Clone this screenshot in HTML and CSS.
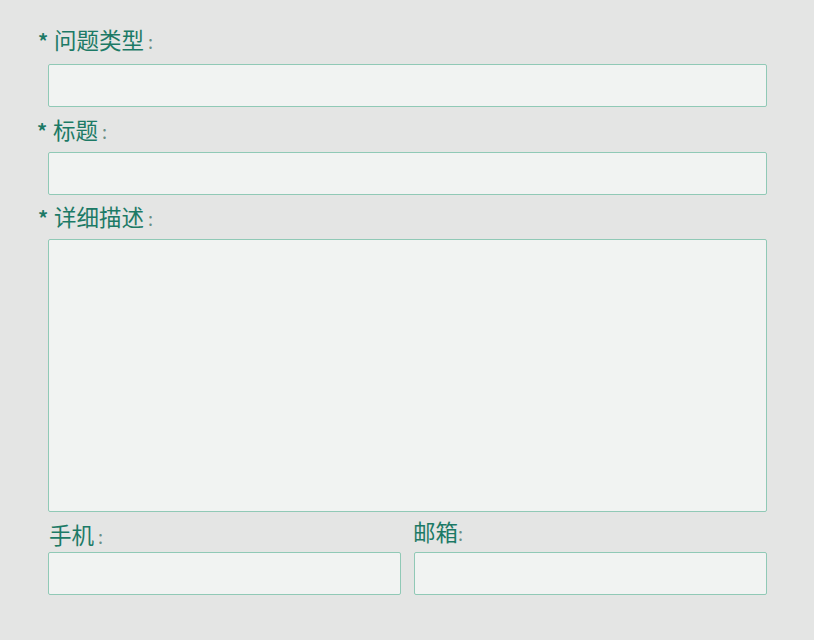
FILE: index.html
```html
<!DOCTYPE html>
<html lang="zh">
<head>
<meta charset="utf-8">
<link rel="stylesheet" href="styles.css">
</head>
<body>
<form class="form">
  <div class="field f1">
    <label class="label"><span class="req">*</span>问题类型<span class="colon">:</span></label>
    <input class="input" type="text">
  </div>
  <div class="field f2">
    <label class="label l2"><span class="req">*</span>标题<span class="colon">:</span></label>
    <input class="input" type="text">
  </div>
  <div class="field f3">
    <label class="label"><span class="req">*</span>详细描述<span class="colon">:</span></label>
    <textarea class="input area"></textarea>
  </div>
  <div class="row">
    <div class="field half">
      <label class="label phone">手机<span class="colon">:</span></label>
      <input class="input" type="text">
    </div>
    <div class="field half">
      <label class="label email">邮箱<span class="colon tight">:</span></label>
      <input class="input" type="text">
    </div>
  </div>
</form>
</body>
</html>
```
FILE: styles.css
```css
html, body {
  margin: 0;
  padding: 0;
  background: #e4e5e4;
}
body {
  width: 814px;
  height: 640px;
  overflow: hidden;
  font-family: "Noto Sans CJK SC", "Noto Sans", sans-serif;
}
.form {
  padding: 26px 47px 0 48px;
}
.field {
  display: flex;
  flex-direction: column;
}
.label {
  display: block;
  height: 30px;
  line-height: 26px;
  font-size: 22.5px;
  color: #1c7a66;
  margin-left: -10px;
  margin-bottom: 8px;
  white-space: nowrap;
}
.req {
  display: inline-block;
  font-weight: bold;
  font-size: 20px;
  width: 16px;
  color: #1c7a66;
}
.colon {
  font-size: 18px;
  color: #6a8f86;
  margin-left: 4px;
}
.colon.tight {
  margin-left: 0;
}
.f2 .label {
  margin-top: 9px;
  margin-left: -11px;
  margin-bottom: 6px;
}
.f3 .label {
  margin-top: 8px;
  margin-bottom: 6px;
}
.input {
  box-sizing: border-box;
  display: block;
  width: 100%;
  height: 43px;
  margin: 0;
  border: 1px solid #90c9b6;
  border-radius: 2px;
  background: #f1f3f2;
  outline: none;
  font-family: inherit;
}
.area {
  height: 273px;
  resize: none;
}
.row {
  display: flex;
  gap: 13px;
  margin-top: 9px;
}
.half {
  flex: 1;
}
.label.phone {
  margin-left: 1px;
  margin-bottom: 1px;
}
.label.email {
  margin-left: -1px;
  margin-top: -3px;
  margin-bottom: 4px;
}
```
